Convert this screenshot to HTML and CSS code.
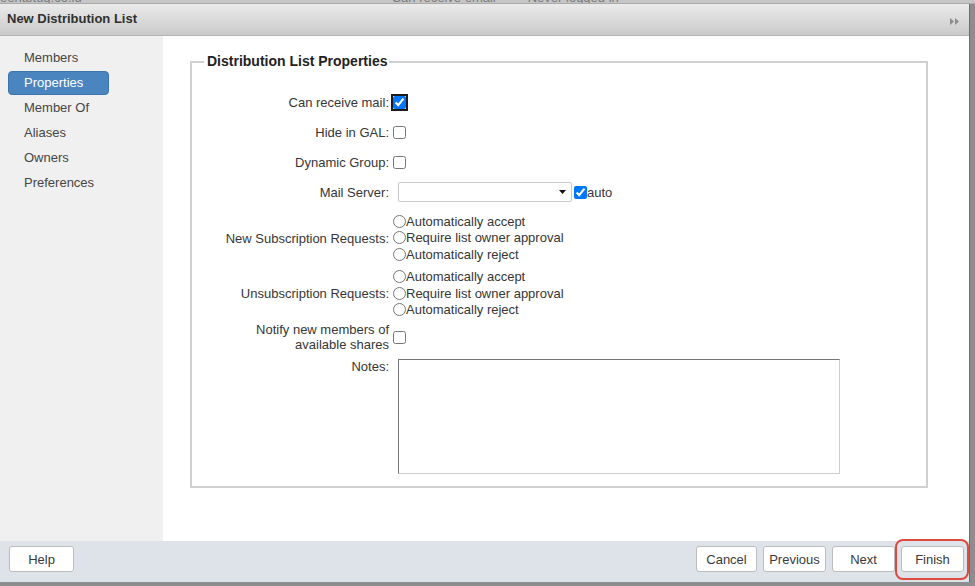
FILE: index.html
```html
<!DOCTYPE html>
<html lang="en">
<head>
    <meta charset="UTF-8">
    <title>New Distribution List</title>
    <link rel="stylesheet" href="styles.css">
</head>
<body>
    <div class="backdrop">
        <span class="bg-a">eehtbtuq.co.id</span>
        <span class="bg-b">Can receive email</span>
        <span class="bg-c">Never logged in</span>
    </div>
    <div class="dialog">
        <div class="titlebar">
            <span class="title">New Distribution List</span>
            <svg class="expand" width="10" height="7" viewBox="0 0 10 7">
                <polygon points="0,0 4,3.5 0,7" fill="#8c8c8c"/>
                <polygon points="5,0 9,3.5 5,7" fill="#8c8c8c"/>
            </svg>
        </div>
        <div class="dialog-body">
            <ul class="nav">
                <li>Members</li>
                <li class="active">Properties</li>
                <li>Member Of</li>
                <li>Aliases</li>
                <li>Owners</li>
                <li>Preferences</li>
            </ul>
            <div class="content">
                <fieldset class="props">
                    <legend>Distribution List Properties</legend>
                    <div class="row">
                        <div class="lbl">Can receive mail:</div>
                        <input type="checkbox" class="focus" checked>
                    </div>
                    <div class="row">
                        <div class="lbl">Hide in GAL:</div>
                        <input type="checkbox">
                    </div>
                    <div class="row">
                        <div class="lbl">Dynamic Group:</div>
                        <input type="checkbox">
                    </div>
                    <div class="row">
                        <div class="lbl">Mail Server:</div>
                        <div class="select-wrap">
                            <select class="server"><option></option></select>
                            <svg class="caret" width="7" height="4" viewBox="0 0 7 4"><polygon points="0,0 7,0 3.5,4" fill="#111"/></svg>
                        </div>
                        <input type="checkbox" class="auto" checked>
                        <span>auto</span>
                    </div>
                    <div class="row group">
                        <div class="lbl">New Subscription Requests:</div>
                        <div class="opts">
                            <label class="opt"><input type="radio" name="sub">Automatically accept</label>
                            <label class="opt"><input type="radio" name="sub">Require list owner approval</label>
                            <label class="opt"><input type="radio" name="sub">Automatically reject</label>
                        </div>
                    </div>
                    <div class="row group">
                        <div class="lbl">Unsubscription Requests:</div>
                        <div class="opts">
                            <label class="opt"><input type="radio" name="unsub">Automatically accept</label>
                            <label class="opt"><input type="radio" name="unsub">Require list owner approval</label>
                            <label class="opt"><input type="radio" name="unsub">Automatically reject</label>
                        </div>
                    </div>
                    <div class="row notify">
                        <div class="lbl">Notify new members of<br>available shares</div>
                        <input type="checkbox">
                    </div>
                    <div class="row notes">
                        <div class="lbl">Notes:</div>
                        <textarea></textarea>
                    </div>
                </fieldset>
            </div>
        </div>
        <div class="buttonbar">
            <button class="button help">Help</button>
            <div class="actions">
                <button class="button">Cancel</button>
                <button class="button wide">Previous</button>
                <button class="button wide">Next</button>
                <button class="button wide finish">Finish</button>
            </div>
        </div>
    </div>
</body>
</html>
```

FILE: styles.css
```css
body {
    margin: 0;
    padding: 0;
    overflow: hidden;
    background-color: #8d8d8d;
    font-family: "Liberation Sans", Arial, sans-serif;
    font-size: 13px;
    color: #363636;
}
.backdrop {
    height: 4px;
    overflow: hidden;
    background-color: #c6c6c6;
    border-bottom: 1px solid #a9a9a9;
    box-sizing: border-box;
    display: flex;
    color: #7a7a7a;
    line-height: 13px;
}
.backdrop span {
    margin-top: -9px;
}
.bg-a {
    margin-left: 0;
}
.bg-b {
    margin-left: 310px;
}
.bg-c {
    margin-left: 32px;
}
.dialog {
    width: 970px;
    height: 578px;
    background-color: #fff;
    border-right: 1px solid #6c6c6c;
    box-sizing: border-box;
    display: flex;
    flex-direction: column;
}
.titlebar {
    height: 32px;
    flex-shrink: 0;
    display: flex;
    align-items: center;
    justify-content: space-between;
    padding: 0 9px 0 7px;
    background: linear-gradient(#ebebeb, #cacaca);
    border-bottom: 1px solid #b4b4b4;
    box-sizing: border-box;
}
.title {
    font-weight: bold;
    font-size: 13px;
    color: #303030;
    margin-top: -2px;
}
.expand {
    margin-top: 4px;
}
.dialog-body {
    flex: 1;
    display: flex;
    min-height: 0;
}
.nav {
    width: 163px;
    flex-shrink: 0;
    margin: 0;
    padding: 10px 0 0;
    list-style: none;
    background-color: #f0f0f0;
}
.nav li {
    width: 101px;
    height: 24px;
    line-height: 24px;
    margin: 0 0 1px 8px;
    padding-left: 16px;
    box-sizing: border-box;
    border-radius: 4px;
    color: #454545;
}
.nav li.active {
    background-color: #4a85c0;
    border: 1px solid #3c74ad;
    padding-left: 15px;
    line-height: 22px;
    color: #fff;
}
.content {
    flex: 1;
    padding-top: 17px;
}
.props {
    width: 738px;
    margin: 0 0 0 27px;
    padding: 17px 12px 12px;
    border: 2px solid #d0d0d0;
    box-sizing: border-box;
}
.props legend {
    font-weight: bold;
    font-size: 14px;
    line-height: 17px;
    padding: 0 2px 0 3px;
    color: #222;
}
.row {
    display: flex;
    align-items: center;
    min-height: 30px;
}
.lbl {
    width: 185px;
    flex-shrink: 0;
    text-align: right;
}
input[type="checkbox"] {
    width: 13px;
    height: 13px;
    margin: 0 0 0 4px;
}
.focus {
    outline: 2px solid #1b1b1b;
    outline-offset: 0;
    border-radius: 2px;
}
.select-wrap {
    position: relative;
    margin-left: 9px;
    height: 20px;
}
.server {
    -webkit-appearance: none;
    appearance: none;
    width: 174px;
    height: 20px;
    border: 1px solid #c9c9c9;
    border-radius: 2px;
    background-color: #fff;
    display: block;
}
.caret {
    position: absolute;
    right: 6px;
    top: 8px;
}
input.auto {
    margin-left: 2px;
}
.group {
    margin-top: 6px;
}
.group .lbl {
    padding-top: 1px;
}
.opt {
    display: flex;
    align-items: center;
    height: 16.5px;
}
.opt input {
    width: 13px;
    height: 13px;
    margin: 0 0 0 4px;
}
.notify {
    margin-top: 4px;
    min-height: 0;
}
.notify .lbl {
    line-height: 15px;
}
.notes {
    margin-top: 7px;
    align-items: flex-start;
    min-height: 0;
}
.notes .lbl {
    line-height: 15px;
}
textarea {
    width: 442px;
    height: 115px;
    margin: 0 0 0 9px;
    box-sizing: border-box;
    border: 1px solid;
    border-color: #767676 #cdcdcd #cdcdcd #767676;
    resize: none;
}
.buttonbar {
    height: 41px;
    flex-shrink: 0;
    display: flex;
    justify-content: space-between;
    padding: 5px 5px 0 9px;
    box-sizing: border-box;
    background-color: #dee2e9;
}
.button {
    height: 26px;
    width: 61px;
    background-color: #fff;
    border: 1px solid #bcbcbc;
    border-radius: 3px;
    font-family: "Liberation Sans", Arial, sans-serif;
    font-size: 13px;
    color: #3a3a3a;
    padding: 0;
}
.help {
    width: 65px;
}
.actions {
    display: flex;
    gap: 6px;
}
.wide {
    width: 63px;
}
.finish {
    position: relative;
}
.finish::after {
    content: "";
    position: absolute;
    top: -8px;
    bottom: -9px;
    left: -7px;
    right: -6px;
    border: 2px solid #e0493d;
    border-radius: 8px;
}
```
